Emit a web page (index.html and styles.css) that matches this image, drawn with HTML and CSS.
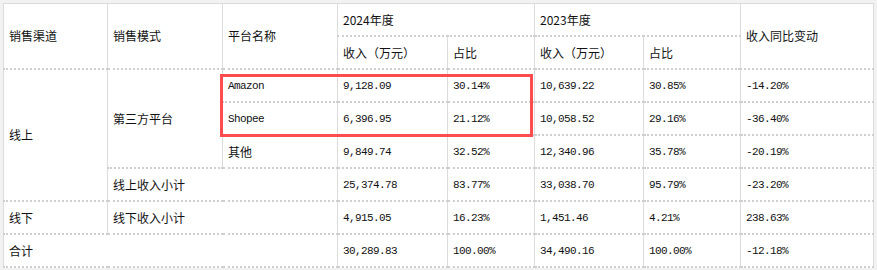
FILE: index.html
```html
<!DOCTYPE html>
<html lang="zh-CN">
<head>
<meta charset="utf-8">
<title>销售渠道收入</title>
<link rel="stylesheet" href="styles.css">
</head>
<body>
<div class="wrap">
  <table class="sales">
    <colgroup>
      <col class="c1"><col class="c2"><col class="c3"><col class="c4"><col class="c5"><col class="c6"><col class="c7"><col class="c8">
    </colgroup>
    <thead>
      <tr>
        <th rowspan="2">销售渠道</th>
        <th rowspan="2">销售模式</th>
        <th rowspan="2">平台名称</th>
        <th colspan="2">2024年度</th>
        <th colspan="2">2023年度</th>
        <th rowspan="2">收入同比变动</th>
      </tr>
      <tr>
        <th>收入（万元）</th>
        <th>占比</th>
        <th>收入（万元）</th>
        <th>占比</th>
      </tr>
    </thead>
    <tbody>
      <tr>
        <td rowspan="4">线上</td>
        <td rowspan="3">第三方平台</td>
        <td class="num">Amazon</td>
        <td class="num">9,128.09</td>
        <td class="num">30.14%</td>
        <td class="num">10,639.22</td>
        <td class="num">30.85%</td>
        <td class="num">-14.20%</td>
      </tr>
      <tr>
        <td class="num">Shopee</td>
        <td class="num">6,396.95</td>
        <td class="num">21.12%</td>
        <td class="num">10,058.52</td>
        <td class="num">29.16%</td>
        <td class="num">-36.40%</td>
      </tr>
      <tr>
        <td>其他</td>
        <td class="num">9,849.74</td>
        <td class="num">32.52%</td>
        <td class="num">12,340.96</td>
        <td class="num">35.78%</td>
        <td class="num">-20.19%</td>
      </tr>
      <tr>
        <td colspan="2">线上收入小计</td>
        <td class="num">25,374.78</td>
        <td class="num">83.77%</td>
        <td class="num">33,038.70</td>
        <td class="num">95.79%</td>
        <td class="num">-23.20%</td>
      </tr>
      <tr>
        <td>线下</td>
        <td colspan="2">线下收入小计</td>
        <td class="num">4,915.05</td>
        <td class="num">16.23%</td>
        <td class="num">1,451.46</td>
        <td class="num">4.21%</td>
        <td class="num">238.63%</td>
      </tr>
      <tr>
        <td colspan="3">合计</td>
        <td class="num">30,289.83</td>
        <td class="num">100.00%</td>
        <td class="num">34,490.16</td>
        <td class="num">100.00%</td>
        <td class="num">-12.18%</td>
      </tr>
    </tbody>
  </table>
  <div class="highlight"></div>
</div>
</body>
</html>
```

FILE: styles.css
```css
html, body {
  margin: 0;
  padding: 0;
  background: #f2f2f2;
}

body {
  padding: 3px 4px 0 3px;
  font-family: "Noto Sans CJK SC", "Liberation Sans", sans-serif;
  font-size: 12px;
  color: #111;
}

.wrap {
  position: relative;
  width: 870px;
}

.sales {
  width: 870px;
  table-layout: fixed;
  border-collapse: collapse;
  background: #fff;
  border: 1px solid #dcdcdc;
}

.c1 { width: 104px; }
.c2 { width: 115px; }
.c3 { width: 115px; }
.c4 { width: 110px; }
.c5 { width: 87px; }
.c6 { width: 109px; }
.c7 { width: 97px; }
.c8 { width: 133px; }

.sales th,
.sales td {
  height: 31px;
  padding: 0 0 0 5px;
  text-align: left;
  vertical-align: middle;
  font-weight: normal;
  border-left: 1px solid #dcdcdc;
  border-right: 1px solid #dcdcdc;
  border-top: 2px dotted #cfcfcf;
  border-bottom: 2px dotted #cfcfcf;
  white-space: nowrap;
  line-height: 14px;
}

.sales thead tr:first-child th {
  border-top: 1px solid #dcdcdc;
}

.sales tbody tr:last-child td {
  border-bottom: 2px dotted #cfcfcf;
}

.num {
  font-family: "Liberation Mono", "DejaVu Sans Mono", monospace;
  font-size: 11px;
  letter-spacing: -0.6px;
}

.highlight {
  position: absolute;
  left: 217px;
  top: 71px;
  width: 313px;
  height: 63px;
  box-sizing: border-box;
  border: 3px solid #ff4d4f;
  pointer-events: none;
}
```
